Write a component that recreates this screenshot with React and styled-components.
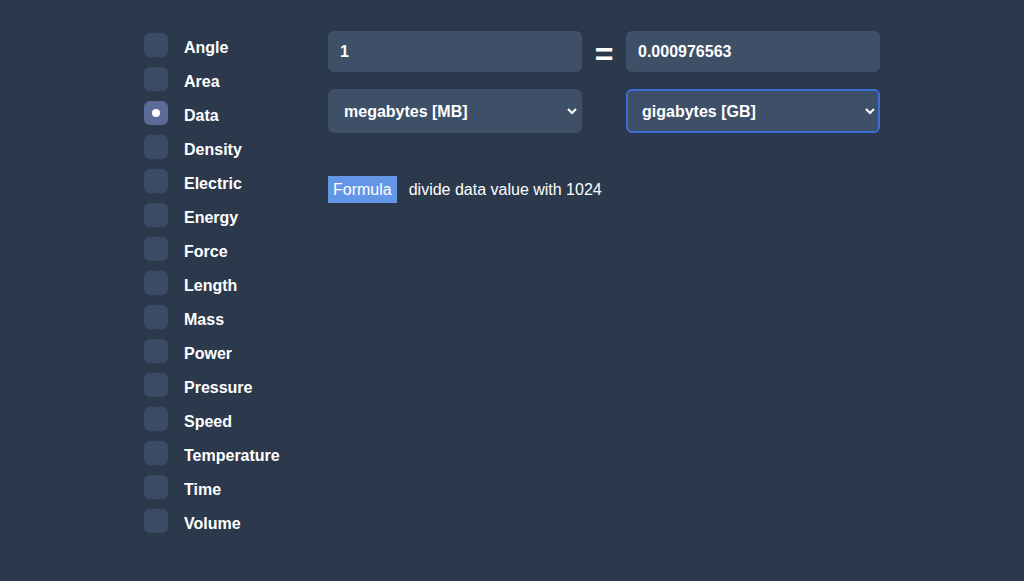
import React, { useState } from "react";
import styled, { createGlobalStyle } from "styled-components";

const units = [
  "Angle", "Area", "Data", "Density", "Electric", "Energy", "Force", "Length",
  "Mass", "Power", "Pressure", "Speed", "Temperature", "Time", "Volume",
];

const App = () => {
  const [unit, setUnit] = useState("Data");
  return (
    <>
      <GlobalStyle />
      <Page>
        <Sidebar>
          {units.map((u) => (
            <Option key={u}>
              <Radio
                type="radio"
                name="unit"
                checked={unit === u}
                onChange={() => setUnit(u)}
              />
              <Label>{u}</Label>
            </Option>
          ))}
        </Sidebar>
        <Main>
          <Converter>
            <ValueInput defaultValue="1" />
            <Equals>=</Equals>
            <ValueInput defaultValue="0.000976563" />
            <UnitSelect defaultValue="MB">
              <option value="MB">megabytes [MB]</option>
              <option value="GB">gigabytes [GB]</option>
            </UnitSelect>
            <span />
            <UnitSelect defaultValue="GB" $focused>
              <option value="MB">megabytes [MB]</option>
              <option value="GB">gigabytes [GB]</option>
            </UnitSelect>
          </Converter>
          <FormulaRow>
            <FormulaTag>Formula</FormulaTag>
            <FormulaText>divide data value with 1024</FormulaText>
          </FormulaRow>
        </Main>
      </Page>
    </>
  );
};

export default App;

const GlobalStyle = createGlobalStyle`
  html, body {
    margin: 0;
    background: #2c394c;
    font-family: "Liberation Sans", Arial, sans-serif;
    color: #fff;
  }
`;

const Page = styled.div`
  display: flex;
  width: 1024px;
  height: 581px;
  box-sizing: border-box;
  padding: 33px 0 0 144px;
`;

const Sidebar = styled.div`
  display: flex;
  flex-direction: column;
  gap: 10px;
  width: 184px;
`;

const Option = styled.label`
  display: flex;
  align-items: center;
  height: 24px;
  cursor: pointer;
`;

const Radio = styled.input`
  appearance: none;
  margin: 0;
  width: 24px;
  height: 24px;
  border-radius: 6px;
  background: #3a4b65;
  position: relative;
  cursor: pointer;

  &:checked {
    background: #5b6a98;
  }
  &:checked::after {
    content: "";
    position: absolute;
    left: 8px;
    top: 8px;
    width: 8px;
    height: 8px;
    border-radius: 50%;
    background: #fff;
  }
`;

const Label = styled.span`
  margin-left: 16px;
  font-size: 16px;
  font-weight: bold;
  color: #fff;
  line-height: 1;
  transform: translateY(3px);
`;

const Main = styled.div`
  display: flex;
  flex-direction: column;
  margin-top: -2px;
`;

const Converter = styled.div`
  display: grid;
  grid-template-columns: 254px 44px 254px;
  row-gap: 17px;
  align-items: center;
`;

const ValueInput = styled.input`
  box-sizing: border-box;
  height: 41px;
  width: 100%;
  border: none;
  border-radius: 6px;
  background: #3d5068;
  color: #fff;
  font-family: inherit;
  font-size: 16px;
  font-weight: bold;
  padding: 0 12px;
  outline: none;
`;

const Equals = styled.div`
  text-align: center;
  font-size: 32px;
  font-weight: bold;
  line-height: 1;
  transform: translateY(2px);
`;

const UnitSelect = styled.select`
  box-sizing: border-box;
  height: 44px;
  width: 100%;
  border-radius: 6px;
  border: 2px solid ${(p) => (p.$focused ? "#3b6fd6" : "#3d5068")};
  background: #3d5068;
  color: #fff;
  font-family: inherit;
  font-size: 16px;
  font-weight: bold;
  padding: 0 10px;
  outline: none;
`;

const FormulaRow = styled.div`
  display: flex;
  align-items: center;
  margin-top: 43px;
`;

const FormulaTag = styled.span`
  background: #6496e8;
  color: #fff;
  font-size: 16px;
  line-height: 19px;
  padding: 4px 5px;
`;

const FormulaText = styled.span`
  margin-left: 12px;
  font-size: 16px;
  color: #fff;
`;
